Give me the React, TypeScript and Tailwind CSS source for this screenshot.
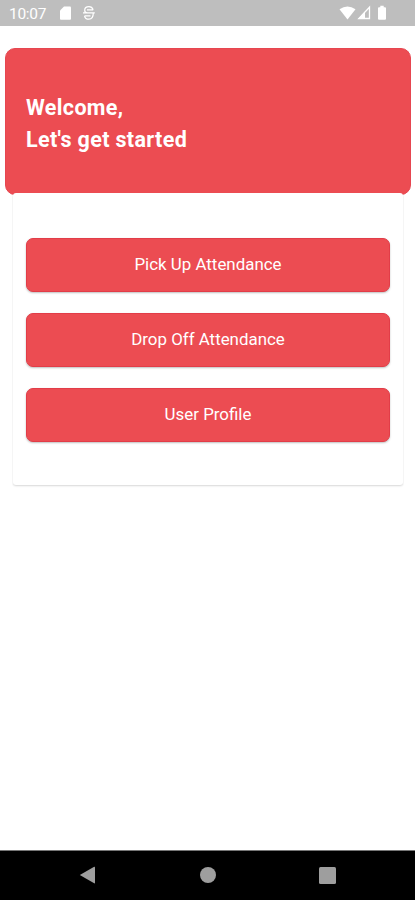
const actions = [
  { label: "Pick Up Attendance", spacing: "mt-[44.5px]" },
  { label: "Drop Off Attendance", spacing: "mt-[21px]" },
  { label: "User Profile", spacing: "mt-[21px]" },
];

function StatusBar() {
  return (
    <header className="flex h-[26px] shrink-0 items-center bg-[#bebebe] pl-[9px] text-white">
      <span className="w-[50px] pt-[2px] text-[15.5px] leading-[24px] tracking-[-0.3px]">10:07</span>
      <svg width="13" height="16" viewBox="0 0 13 16" fill="currentColor">
        <path d="M5 1.5h6a1 1 0 0 1 1 1v11.2a1 1 0 0 1-1 1H2a1 1 0 0 1-1-1V5.5z" />
      </svg>
      <svg className="ml-[10px]" width="14" height="16" viewBox="0 0 14 16" fill="none" stroke="currentColor" strokeWidth="1.2">
        <path d="M11.2 4.7C10.4 2.7 9 1.7 7 1.7 4.5 1.7 2.7 3.2 2.7 5.2c0 1.6 1.2 2.6 3 2.6h5.6c0 3.7-1.2 6.4-4.4 6.4-2.4 0-4-1.4-4.4-3.4M1 7.8h11.8M5 4.8h6.2M2.5 10.8h6" />
      </svg>
      <svg className="ml-auto" width="17" height="16" viewBox="0 0 17 16" fill="currentColor">
        <path d="M.5 4.3Q8.5-1.3 16.5 4.3L8.5 14.5z" />
      </svg>
      <svg className="ml-px" width="14" height="16" viewBox="0 0 14 16" fill="none" stroke="currentColor">
        <path d="M12.5 2.2v11.3H1.8z" strokeWidth="1.3" />
        <path d="M1 14 8 6.5V14z" fill="currentColor" stroke="none" />
      </svg>
      <svg className="ml-[6px] mr-[28px]" width="10" height="16" viewBox="0 0 10 16" fill="currentColor">
        <path d="M3.3.8h3.4v1.4H8a1 1 0 0 1 1 1v10.6a1 1 0 0 1-1 1H2a1 1 0 0 1-1-1V3.2a1 1 0 0 1 1-1h1.3z" />
      </svg>
    </header>
  );
}

function NavigationBar() {
  return (
    <nav className="flex h-[50px] shrink-0 items-center border-t border-[#777] bg-black pb-px pl-[79px] text-[#9e9e9e]">
      <svg width="17" height="18" viewBox="0 0 17 18" fill="currentColor">
        <path d="M.8 9 15.2.7q.8-.3.8.6v15.4q0 .9-.8.6z" />
      </svg>
      <span className="ml-[104px] size-4 rounded-full bg-[#9e9e9e]" />
      <span className="ml-[103px] h-[17px] w-[17px] rounded-[1.5px] bg-[#9e9e9e]" />
    </nav>
  );
}

export default function App() {
  return (
    <div className="flex h-[900px] w-[415px] flex-col overflow-hidden bg-white font-[Roboto,sans-serif]">
      <StatusBar />
      <main className="flex-1">
        <section className="ml-[5px] mt-[21.5px] h-[147px] w-[406px] rounded-[10px] border border-[#e64650] bg-[#ec4c52] pl-5 pt-[43px] text-white">
          <h1 className="whitespace-nowrap text-[21.5px] font-bold leading-8 tracking-[0.35px]">
            Welcome,
            <br />
            Let&#39;s get started
          </h1>
        </section>
        <section className="relative -mt-[1.5px] ml-[13px] flex h-[292px] w-[390px] flex-col items-center rounded-[3px] bg-white shadow-[0_1px_2px_rgba(0,0,0,0.16)] [clip-path:inset(0_-1px_-4px_-1px)]">
          {actions.map(({ label, spacing }) => (
            <button
              key={label}
              className={`${spacing} h-[54px] w-[364px] shrink-0 rounded-[7px] border border-[#e23d48] bg-[#ec4c52] pt-px text-[16.9px] text-white shadow-[0_1px_2px_rgba(0,0,0,0.25)]`}
            >
              {label}
            </button>
          ))}
        </section>
      </main>
      <NavigationBar />
    </div>
  );
}
